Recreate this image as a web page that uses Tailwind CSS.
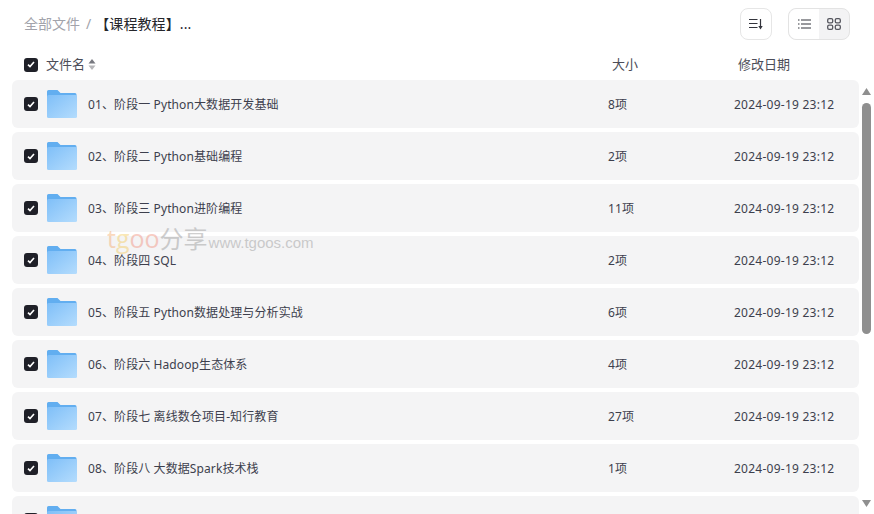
<!DOCTYPE html>
<html lang="zh-CN">
<head>
    <meta charset="UTF-8">
    <title>全部文件</title>
    <script src="https://cdn.jsdelivr.net/npm/@tailwindcss/browser@4"></script>
</head>
<body class="bg-white overflow-hidden font-['Noto_Sans','Noto_Sans_CJK_SC',sans-serif] text-[#3d3f4d]">
<svg class="absolute" width="0" height="0"><defs><linearGradient id="folder" x1="0" y1="0" x2="1" y2="1"><stop offset="0" stop-color="#7fbff8"/><stop offset="1" stop-color="#b4dcfd"/></linearGradient></defs></svg>
<div class="relative w-[874px] h-[514px] overflow-hidden flex flex-col">
    <!-- Toolbar -->
    <div class="h-[50px] shrink-0 flex items-start pl-6 pr-6 pt-2">
        <div class="flex items-center h-8 text-sm leading-none">
            <span class="text-[#a2a3ab]">全部文件</span>
            <span class="text-[#a2a3ab] ml-[6px] mr-1">/</span>
            <span class="text-[#25262b] tracking-[0.1px]">【课程教程】...</span>
        </div>
        <div class="ml-auto flex gap-4">
            <button class="w-8 h-8 rounded-lg border border-[#e6e6e6] flex items-center justify-center">
                <svg width="14" height="12" viewBox="0 0 14 12" fill="none" stroke="#33343c" stroke-width="1.2"><path d="M0 1.5h8.500M0 5.500h8.500M0 9.500h8.500M11.500 1v8"/><path d="M9.300 8 11.500 11.500 13.700 8z" fill="#33343c" stroke="none"/></svg>
            </button>
            <div class="w-[62px] h-8 rounded-lg border border-[#e3e3e3] bg-[#f3f3f4] flex">
                <div class="w-[30px] h-full rounded-l-lg bg-white flex items-center justify-center">
                    <svg width="13" height="10" viewBox="0 0 13 10" fill="none" stroke="#33343c" stroke-width="1.2"><path d="M3 1h10M3 5h10M3 9h10M0 1h1.500M0 5h1.500M0 9h1.500"/></svg>
                </div>
                <div class="flex-1 flex items-center justify-center">
                    <svg width="14" height="12" viewBox="0 0 14 12" fill="none" stroke="#55565e" stroke-width="1.3"><rect x="0.7" y="0.7" width="5" height="4.2" rx="1.4"/><rect x="8.3" y="0.7" width="5" height="4.2" rx="1.4"/><rect x="0.7" y="7.1" width="5" height="4.2" rx="1.4"/><rect x="8.3" y="7.1" width="5" height="4.2" rx="1.4"/></svg>
                </div>
            </div>
        </div>
    </div>

    <!-- Table header -->
    <div class="h-[30px] shrink-0 flex items-center pl-6 pb-px text-[13px] text-[#4c4d58]">
        <span class="w-[14px] h-[14px] rounded-[3px] bg-[#1f2028] flex items-center justify-center">
            <svg width="8" height="7" viewBox="0 0 8 7" fill="none" stroke="#fff" stroke-width="1.6"><path d="M1 3.6 3 5.600 7 1"/></svg>
        </span>
        <span class="ml-2">文件名</span>
        <svg class="ml-[3px]" width="8" height="11" viewBox="0 0 8 11"><path d="M4 0 7.500 4.600H.5z" fill="#77787f"/><path d="M4 11 .5 6.400h7z" fill="#b5b5b8"/></svg>
        <span class="ml-[516px] w-[126px]">大小</span>
        <span>修改日期</span>
    </div>

    <!-- File list and scrollbar -->
    <div class="flex-1 min-h-0 flex">
        <div class="w-[847px] ml-3 flex flex-col gap-1 overflow-hidden text-xs tracking-[0.1px]">
            <div class="h-12 shrink-0 rounded-md bg-[#f4f4f5] flex items-center pl-3">
                <span class="w-[14px] h-[14px] rounded-[3px] bg-[#1f2028] flex items-center justify-center"><svg width="8" height="7" viewBox="0 0 8 7" fill="none" stroke="#fff" stroke-width="1.6"><path d="M1 3.6 3 5.600 7 1"/></svg></span>
                <svg class="ml-[9px]" width="30" height="28" viewBox="0 0 30 28"><path d="M0 1.500A1.500 1.500 0 0 1 1.500 0h9l3 3H28a1.500 1.500 0 0 1 1.500 1.500V8H0z" fill="#62aef0"/><rect y="5" width="30" height="23" rx="1.500" fill="url(#folder)"/></svg>
                <span class="ml-[11px] w-[520px] pt-0.5">01、阶段一 Python大数据开发基础</span>
                <span class="w-[126px] pt-0.5">8项</span>
                <span class="pt-0.5 tracking-[0.25px]">2024-09-19 23:12</span>
            </div>
            <div class="h-12 shrink-0 rounded-md bg-[#f4f4f5] flex items-center pl-3">
                <span class="w-[14px] h-[14px] rounded-[3px] bg-[#1f2028] flex items-center justify-center"><svg width="8" height="7" viewBox="0 0 8 7" fill="none" stroke="#fff" stroke-width="1.6"><path d="M1 3.6 3 5.600 7 1"/></svg></span>
                <svg class="ml-[9px]" width="30" height="28" viewBox="0 0 30 28"><path d="M0 1.500A1.500 1.500 0 0 1 1.500 0h9l3 3H28a1.500 1.500 0 0 1 1.500 1.500V8H0z" fill="#62aef0"/><rect y="5" width="30" height="23" rx="1.500" fill="url(#folder)"/></svg>
                <span class="ml-[11px] w-[520px] pt-0.5">02、阶段二 Python基础编程</span>
                <span class="w-[126px] pt-0.5">2项</span>
                <span class="pt-0.5 tracking-[0.25px]">2024-09-19 23:12</span>
            </div>
            <div class="h-12 shrink-0 rounded-md bg-[#f4f4f5] flex items-center pl-3">
                <span class="w-[14px] h-[14px] rounded-[3px] bg-[#1f2028] flex items-center justify-center"><svg width="8" height="7" viewBox="0 0 8 7" fill="none" stroke="#fff" stroke-width="1.6"><path d="M1 3.6 3 5.600 7 1"/></svg></span>
                <svg class="ml-[9px]" width="30" height="28" viewBox="0 0 30 28"><path d="M0 1.500A1.500 1.500 0 0 1 1.500 0h9l3 3H28a1.500 1.500 0 0 1 1.500 1.500V8H0z" fill="#62aef0"/><rect y="5" width="30" height="23" rx="1.500" fill="url(#folder)"/></svg>
                <span class="ml-[11px] w-[520px] pt-0.5">03、阶段三 Python进阶编程</span>
                <span class="w-[126px] pt-0.5">11项</span>
                <span class="pt-0.5 tracking-[0.25px]">2024-09-19 23:12</span>
            </div>
            <div class="h-12 shrink-0 rounded-md bg-[#f4f4f5] flex items-center pl-3">
                <span class="w-[14px] h-[14px] rounded-[3px] bg-[#1f2028] flex items-center justify-center"><svg width="8" height="7" viewBox="0 0 8 7" fill="none" stroke="#fff" stroke-width="1.6"><path d="M1 3.6 3 5.600 7 1"/></svg></span>
                <svg class="ml-[9px]" width="30" height="28" viewBox="0 0 30 28"><path d="M0 1.500A1.500 1.500 0 0 1 1.500 0h9l3 3H28a1.500 1.500 0 0 1 1.500 1.500V8H0z" fill="#62aef0"/><rect y="5" width="30" height="23" rx="1.500" fill="url(#folder)"/></svg>
                <span class="ml-[11px] w-[520px] pt-0.5">04、阶段四 SQL</span>
                <span class="w-[126px] pt-0.5">2项</span>
                <span class="pt-0.5 tracking-[0.25px]">2024-09-19 23:12</span>
            </div>
            <div class="h-12 shrink-0 rounded-md bg-[#f4f4f5] flex items-center pl-3">
                <span class="w-[14px] h-[14px] rounded-[3px] bg-[#1f2028] flex items-center justify-center"><svg width="8" height="7" viewBox="0 0 8 7" fill="none" stroke="#fff" stroke-width="1.6"><path d="M1 3.6 3 5.600 7 1"/></svg></span>
                <svg class="ml-[9px]" width="30" height="28" viewBox="0 0 30 28"><path d="M0 1.500A1.500 1.500 0 0 1 1.500 0h9l3 3H28a1.500 1.500 0 0 1 1.500 1.500V8H0z" fill="#62aef0"/><rect y="5" width="30" height="23" rx="1.500" fill="url(#folder)"/></svg>
                <span class="ml-[11px] w-[520px] pt-0.5">05、阶段五 Python数据处理与分析实战</span>
                <span class="w-[126px] pt-0.5">6项</span>
                <span class="pt-0.5 tracking-[0.25px]">2024-09-19 23:12</span>
            </div>
            <div class="h-12 shrink-0 rounded-md bg-[#f4f4f5] flex items-center pl-3">
                <span class="w-[14px] h-[14px] rounded-[3px] bg-[#1f2028] flex items-center justify-center"><svg width="8" height="7" viewBox="0 0 8 7" fill="none" stroke="#fff" stroke-width="1.6"><path d="M1 3.6 3 5.600 7 1"/></svg></span>
                <svg class="ml-[9px]" width="30" height="28" viewBox="0 0 30 28"><path d="M0 1.500A1.500 1.500 0 0 1 1.500 0h9l3 3H28a1.500 1.500 0 0 1 1.500 1.500V8H0z" fill="#62aef0"/><rect y="5" width="30" height="23" rx="1.500" fill="url(#folder)"/></svg>
                <span class="ml-[11px] w-[520px] pt-0.5">06、阶段六 Hadoop生态体系</span>
                <span class="w-[126px] pt-0.5">4项</span>
                <span class="pt-0.5 tracking-[0.25px]">2024-09-19 23:12</span>
            </div>
            <div class="h-12 shrink-0 rounded-md bg-[#f4f4f5] flex items-center pl-3">
                <span class="w-[14px] h-[14px] rounded-[3px] bg-[#1f2028] flex items-center justify-center"><svg width="8" height="7" viewBox="0 0 8 7" fill="none" stroke="#fff" stroke-width="1.6"><path d="M1 3.6 3 5.600 7 1"/></svg></span>
                <svg class="ml-[9px]" width="30" height="28" viewBox="0 0 30 28"><path d="M0 1.500A1.500 1.500 0 0 1 1.500 0h9l3 3H28a1.500 1.500 0 0 1 1.500 1.500V8H0z" fill="#62aef0"/><rect y="5" width="30" height="23" rx="1.500" fill="url(#folder)"/></svg>
                <span class="ml-[11px] w-[520px] pt-0.5">07、阶段七 离线数仓项目-知行教育</span>
                <span class="w-[126px] pt-0.5">27项</span>
                <span class="pt-0.5 tracking-[0.25px]">2024-09-19 23:12</span>
            </div>
            <div class="h-12 shrink-0 rounded-md bg-[#f4f4f5] flex items-center pl-3">
                <span class="w-[14px] h-[14px] rounded-[3px] bg-[#1f2028] flex items-center justify-center"><svg width="8" height="7" viewBox="0 0 8 7" fill="none" stroke="#fff" stroke-width="1.6"><path d="M1 3.6 3 5.600 7 1"/></svg></span>
                <svg class="ml-[9px]" width="30" height="28" viewBox="0 0 30 28"><path d="M0 1.500A1.500 1.500 0 0 1 1.500 0h9l3 3H28a1.500 1.500 0 0 1 1.500 1.500V8H0z" fill="#62aef0"/><rect y="5" width="30" height="23" rx="1.500" fill="url(#folder)"/></svg>
                <span class="ml-[11px] w-[520px] pt-0.5">08、阶段八 大数据Spark技术栈</span>
                <span class="w-[126px] pt-0.5">1项</span>
                <span class="pt-0.5 tracking-[0.25px]">2024-09-19 23:12</span>
            </div>
            <div class="h-12 shrink-0 rounded-md bg-[#f4f4f5] flex items-center pl-3">
                <span class="w-[14px] h-[14px] rounded-[3px] bg-[#1f2028] flex items-center justify-center"><svg width="8" height="7" viewBox="0 0 8 7" fill="none" stroke="#fff" stroke-width="1.6"><path d="M1 3.6 3 5.600 7 1"/></svg></span>
                <svg class="ml-[9px]" width="30" height="28" viewBox="0 0 30 28"><path d="M0 1.500A1.500 1.500 0 0 1 1.500 0h9l3 3H28a1.500 1.500 0 0 1 1.500 1.500V8H0z" fill="#62aef0"/><rect y="5" width="30" height="23" rx="1.500" fill="url(#folder)"/></svg>
            </div>
        </div>
        <!-- Scrollbar -->
        <div class="w-[9px] ml-[3px] flex flex-col items-center">
            <svg class="mt-2 shrink-0" width="9" height="8" viewBox="0 0 9 8"><path d="M4.500 0 9 7H0z" fill="#8f8f8f"/></svg>
            <div class="w-[9px] h-[231px] mt-[7px] rounded-full bg-[#8f8f8f]"></div>
            <svg class="mt-[165px] shrink-0" width="9" height="8" viewBox="0 0 9 8"><path d="M4.500 8 0 1h9z" fill="#8f8f8f"/></svg>
        </div>
    </div>

    <!-- Watermark -->
    <div class="absolute left-[107px] top-[226px] flex items-baseline pointer-events-none whitespace-nowrap opacity-40">
        <span class="text-[25px] leading-none font-['Open_Sans',sans-serif] text-[#f3a15c]">t</span><span class="text-[25px] leading-none font-['Open_Sans',sans-serif] text-[#f2c44a]">g</span><span class="text-[25px] leading-none font-['Open_Sans',sans-serif] text-[#f0846e]">oo</span>
        <span class="text-[24px] leading-none text-[#8a8a8a]">分享</span>
        <span class="ml-px text-[15px] leading-none font-['Liberation_Sans',sans-serif] text-[#8a8a8a]">www.tgoos.com</span>
    </div>
</div>
</body>
</html>
